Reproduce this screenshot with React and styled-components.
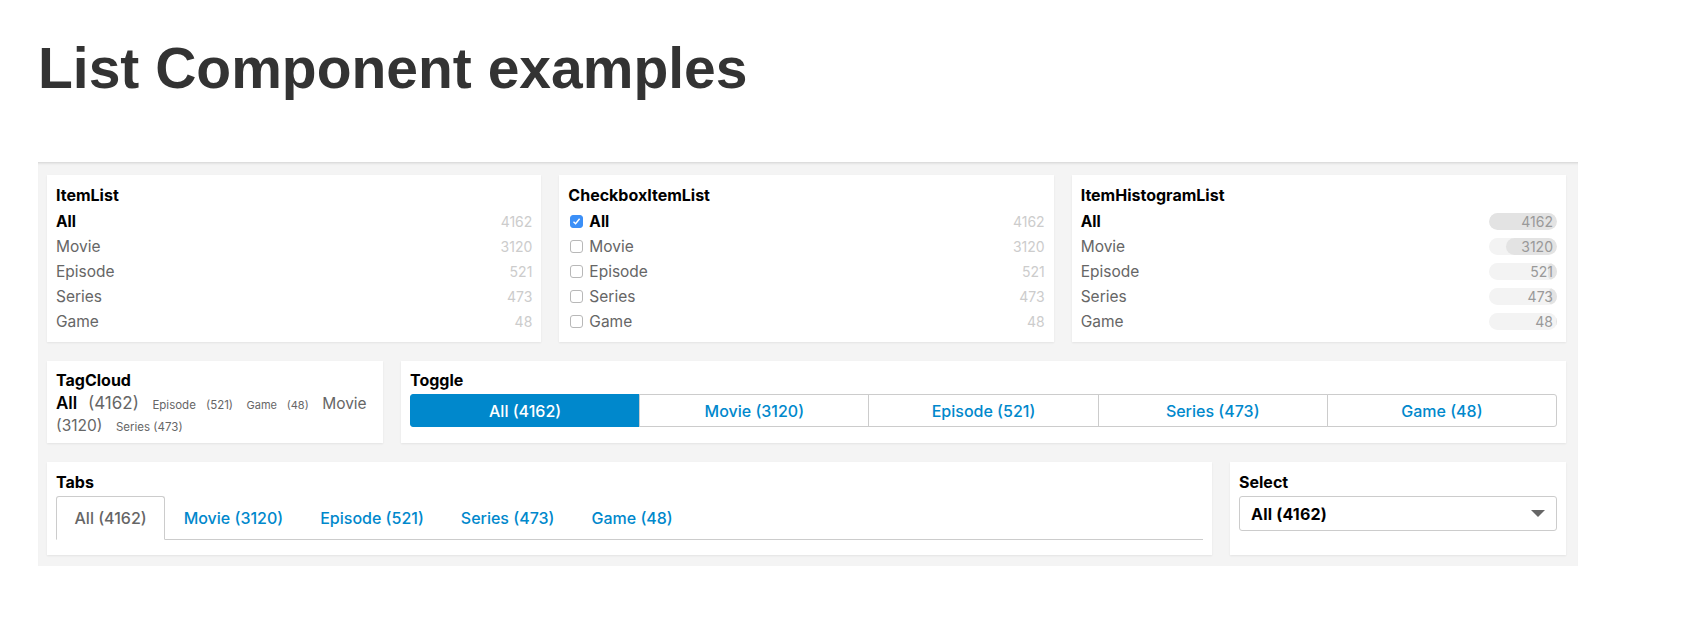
import React from 'react';
import styled, { createGlobalStyle } from 'styled-components';

const GlobalStyle = createGlobalStyle`
    *, *::before, *::after {
        box-sizing: border-box;
    }
    body {
        margin: 0;
        background: #fff;
        font-family: Inter, 'Liberation Sans', sans-serif;
        color: #666;
    }
`;

const Page = styled.div`
    padding: 36px 0 0 38px;
    width: 1578px;
`;

const Heading = styled.h1`
    margin: 0 0 62px 0;
    font: bold 57px/64px 'Liberation Sans', Arial, sans-serif;
    color: #333;
`;

const Board = styled.div`
    background: #f4f4f4;
    padding: 13px 12px 11px 9px;
    display: flex;
    flex-direction: column;
    gap: 19px;
    box-shadow: inset 0 3px 3px -2px rgba(0, 0, 0, 0.15);
`;

const Row = styled.div`
    display: flex;
    gap: 18px;
`;

const Panel = styled.div`
    background: #fff;
    box-shadow: 0 1px 2px rgba(0, 0, 0, 0.07);
    padding: ${(p) => p.$top || 10}px 9px ${(p) => p.$bottom || 8}px;
    flex: ${(p) => (p.$fixed ? '0 0 336px' : '1 1 0')};
    min-width: 0;
`;

const Title = styled.div`
    font-size: 16px;
    line-height: 20px;
    font-weight: 700;
    color: #000;
    margin-bottom: ${(p) => p.$gap || 4}px;
`;

const Item = styled.div`
    display: flex;
    align-items: center;
    height: 25px;
    font-size: 15.5px;
    color: ${(p) => (p.$active ? '#000' : '#666')};
    font-weight: ${(p) => (p.$active ? 700 : 400)};
`;

const Label = styled.span`
    flex: 1;
`;

const Count = styled.span`
    font-size: 14px;
    font-weight: 400;
    color: #ccc;
`;

const Box = styled.span`
    width: 13px;
    height: 13px;
    border-radius: 3px;
    margin: 0 6px 0 2px;
    display: inline-flex;
    align-items: center;
    justify-content: center;
    border: 1px solid ${(p) => (p.$checked ? '#3b8ff7' : '#b8b8b8')};
    background: ${(p) => (p.$checked ? '#3b8ff7' : '#fff')};
`;

const Bar = styled.span`
    position: relative;
    width: 68px;
    height: 17px;
    border-radius: 9px;
    background: #f3f3f3;
    overflow: hidden;
    display: flex;
    align-items: center;
    justify-content: flex-end;
`;

const BarFill = styled.span`
    position: absolute;
    top: 0;
    right: 0;
    bottom: 0;
    border-radius: 9px;
    background: #e3e3e3;
`;

const BarCount = styled.span`
    position: relative;
    font-size: 14px;
    font-weight: 400;
    color: #999;
    padding-right: 4px;
`;

const Cloud = styled.div`
    line-height: 21.5px;
    color: #666;
`;

const Tag = styled.span`
    font-size: ${(p) => p.$size}px;
    line-height: 1;
    margin-right: ${(p) => (p.$last ? 0 : 9)}px;
    color: #666;
`;

const TagLabel = styled.span`
    margin-right: ${(p) => p.$space}em;
    color: ${(p) => (p.$active ? '#000' : '#666')};
    font-weight: ${(p) => (p.$active ? 600 : 400)};
`;

const ToggleBar = styled.div`
    margin-top: 1px;
    display: flex;
    height: 33px;
`;

const ToggleItem = styled.div`
    flex: 1;
    display: flex;
    align-items: center;
    justify-content: center;
    font-size: 16px;
    font-weight: 500;
    border: 1px solid ${(p) => (p.$active ? '#0088cc' : '#ccc')};
    margin-left: -1px;
    background: ${(p) => (p.$active ? '#0088cc' : '#fff')};
    color: ${(p) => (p.$active ? '#fff' : '#0088cc')};
    &:first-child {
        margin-left: 0;
        border-radius: 3px 0 0 3px;
    }
    &:last-child {
        border-radius: 0 3px 3px 0;
    }
`;

const TabList = styled.div`
    margin-top: 1px;
    display: flex;
    border-bottom: 1px solid #ccc;
`;

const Tab = styled.div`
    height: 44px;
    padding: 0 17.5px;
    display: flex;
    align-items: center;
    font-size: 16px;
    font-weight: 500;
    margin-bottom: -1px;
    border: 1px solid ${(p) => (p.$active ? '#ccc' : 'transparent')};
    border-bottom-color: ${(p) => (p.$active ? '#fff' : 'transparent')};
    border-radius: 3px 3px 0 0;
    background: ${(p) => (p.$active ? '#fff' : 'transparent')};
    color: ${(p) => (p.$active ? '#666' : '#0088cc')};
`;

const SelectBox = styled.div`
    margin-top: 1px;
    height: 35px;
    border: 1px solid #ccc;
    border-radius: 3px;
    padding: 0 11px;
    display: flex;
    align-items: center;
    justify-content: space-between;
    font-size: 16px;
    font-weight: 700;
    letter-spacing: 0.2px;
    color: #000;
`;

const items = [
    { label: 'All', count: 4162, active: true },
    { label: 'Movie', count: 3120 },
    { label: 'Episode', count: 521 },
    { label: 'Series', count: 473 },
    { label: 'Game', count: 48 },
];

const tags = [
    { label: 'All', count: 4162, size: 17, space: 0.35, active: true },
    { label: 'Episode', count: 521, size: 11.5, space: 0.6 },
    { label: 'Game', count: 48, size: 11, space: 0.6 },
    { label: 'Movie', count: 3120, size: 15.5, space: 0 },
    { label: 'Series', count: 473, size: 11.5, space: 0, last: true },
];

const Check = () => (
    <svg width="9" height="9" viewBox="0 0 9 9">
        <path d="M1.5 4.8 L3.6 6.8 L7.6 1.8" fill="none" stroke="#fff" strokeWidth="1.4" />
    </svg>
);

const App = () => {
    const max = items[0].count;
    return (
        <Page>
            <GlobalStyle />
            <Heading>List Component examples</Heading>
            <Board>
                <Row>
                    <Panel>
                        <Title>ItemList</Title>
                        {items.map((i) => (
                            <Item key={i.label} $active={i.active}>
                                <Label>{i.label}</Label>
                                <Count>{i.count}</Count>
                            </Item>
                        ))}
                    </Panel>
                    <Panel>
                        <Title>CheckboxItemList</Title>
                        {items.map((i) => (
                            <Item key={i.label} $active={i.active}>
                                <Box $checked={i.active}>{i.active && <Check />}</Box>
                                <Label>{i.label}</Label>
                                <Count>{i.count}</Count>
                            </Item>
                        ))}
                    </Panel>
                    <Panel>
                        <Title>ItemHistogramList</Title>
                        {items.map((i) => (
                            <Item key={i.label} $active={i.active}>
                                <Label>{i.label}</Label>
                                <Bar>
                                    <BarFill style={{ width: `${(i.count / max) * 100}%` }} />
                                    <BarCount>{i.count}</BarCount>
                                </Bar>
                            </Item>
                        ))}
                    </Panel>
                </Row>
                <Row>
                    <Panel $fixed $top={9} $bottom={7}>
                        <Title $gap={3}>TagCloud</Title>
                        <Cloud>
                            {tags.map((t) => (
                                <React.Fragment key={t.label}>
                                    <Tag $size={t.size} $last={t.last}>
                                        <TagLabel $active={t.active} $space={t.space}>
                                            {t.label}
                                        </TagLabel>{' '}
                                        ({t.count})
                                    </Tag>{' '}
                                </React.Fragment>
                            ))}
                        </Cloud>
                    </Panel>
                    <Panel $top={9}>
                        <Title>Toggle</Title>
                        <ToggleBar>
                            {items.map((i) => (
                                <ToggleItem key={i.label} $active={i.active}>
                                    {i.label} ({i.count})
                                </ToggleItem>
                            ))}
                        </ToggleBar>
                    </Panel>
                </Row>
                <Row>
                    <Panel $bottom={15}>
                        <Title>Tabs</Title>
                        <TabList>
                            {items.map((i) => (
                                <Tab key={i.label} $active={i.active}>
                                    {i.label} ({i.count})
                                </Tab>
                            ))}
                        </TabList>
                    </Panel>
                    <Panel $fixed>
                        <Title>Select</Title>
                        <SelectBox>
                            All (4162)
                            <svg width="14" height="8" viewBox="0 0 14 8">
                                <path d="M0 0 H14 L7 7 Z" fill="#666" />
                            </svg>
                        </SelectBox>
                    </Panel>
                </Row>
            </Board>
        </Page>
    );
};

export default App;
